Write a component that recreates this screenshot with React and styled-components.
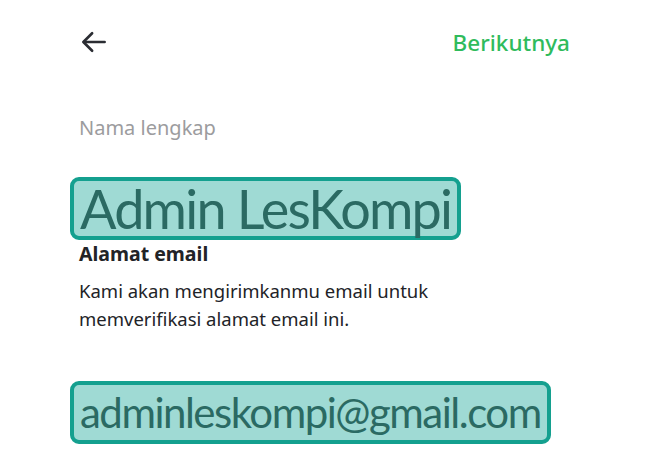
import React from 'react'
import styled, { createGlobalStyle } from 'styled-components'

const GlobalStyle = createGlobalStyle`
    html, body {
        margin: 0;
        padding: 0;
        background: #fff;
    }
    body {
        font-family: "Noto Sans", "Open Sans", sans-serif;
    }
`

const App = () => {
  return (
    <>
      <GlobalStyle />
      <Page>
        <TopBar>
          <BackButton aria-label="Kembali">
            <svg width="30" height="30" viewBox="0 0 24 24" fill="none" stroke="#2b2d33" strokeWidth="2.1" strokeLinecap="round" strokeLinejoin="round">
              <path d="M20.5 12H4" />
              <path d="M10.5 5l-7 7 7 7" />
            </svg>
          </BackButton>
          <NextLink>Berikutnya</NextLink>
        </TopBar>

        <Label>Nama lengkap</Label>
        <Highlight $size={54} $spacing={-1.8} $height={55}>Admin LesKompi</Highlight>

        <SectionTitle>Alamat email</SectionTitle>
        <Hint>Kami akan mengirimkanmu email untuk memverifikasi alamat email ini.</Hint>

        <Highlight $size={42} $spacing={-1.5} $top={48} $height={55}>adminleskompi@gmail.com</Highlight>
      </Page>
    </>
  )
}

const Page = styled.div`
    width: 650px;
    height: 470px;
    box-sizing: border-box;
    padding: 0 0 0 70px;
    display: flex;
    flex-direction: column;
    align-items: flex-start;
    overflow: hidden;
`

const TopBar = styled.div`
    width: 500px;
    height: 84px;
    display: flex;
    align-items: center;
    justify-content: space-between;
`

const BackButton = styled.button`
    border: none;
    background: none;
    padding: 0;
    margin-left: 9px;
    display: flex;
    cursor: pointer;
`

const NextLink = styled.a`
    color: #2fbb5c;
    font-size: 22.5px;
    font-weight: 500;
    cursor: pointer;
`

const Label = styled.div`
    margin: 30px 0 0 9px;
    color: #9c9c9e;
    font-size: 20px;
`

const Highlight = styled.div`
    margin-top: ${p => p.$top || 36}px;
    box-sizing: border-box;
    padding: 0 6px;
    background: #9fdad4;
    border: 4px solid #14a08f;
    border-radius: 9px;
    color: #2b6a63;
    font-family: "Lato", sans-serif;
    font-size: ${p => p.$size}px;
    letter-spacing: ${p => p.$spacing || 0}px;
    line-height: ${p => p.$height}px;
    white-space: nowrap;
`

const SectionTitle = styled.div`
    margin: 0 0 0 9px;
    color: #222327;
    font-size: 19.5px;
    font-weight: 700;
`

const Hint = styled.p`
    margin: 10px 0 0 9px;
    width: 380px;
    color: #222327;
    font-size: 18.5px;
    line-height: 28px;
`

export default App
